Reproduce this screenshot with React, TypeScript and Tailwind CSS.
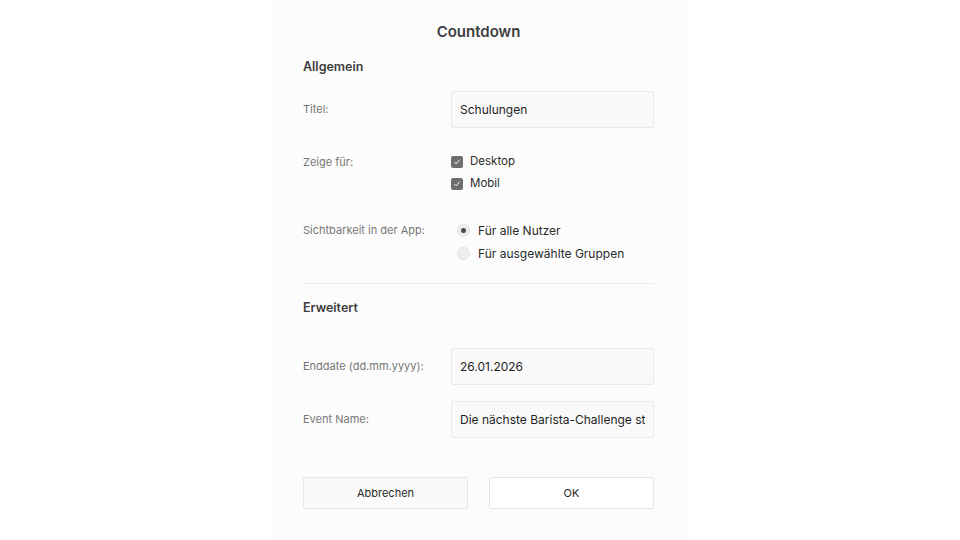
import React from "react";

const font = { fontFamily: "Inter, 'Noto Sans', sans-serif" };

const Checkbox = ({ label }: { label: string }) => (
  <label className="flex items-center h-[22px] gap-[7px]">
    <span className="w-[12px] h-[12px] rounded-[2px] bg-[#6e6e6e] flex items-center justify-center">
      <svg width="8" height="8" viewBox="0 0 8 8" fill="none">
        <path d="M1.6 4.3 L3.2 5.9 L6.4 2" stroke="#f2f2f2" strokeWidth="1" strokeLinecap="round" strokeLinejoin="round" />
      </svg>
    </span>
    <span className="text-[11.5px] text-[#2b2b2b]">{label}</span>
  </label>
);

const Radio = ({ label, checked }: { label: string; checked?: boolean }) => (
  <label className="flex items-center h-[23px] gap-[8px] pl-[6px]">
    <span className="w-[13px] h-[13px] rounded-full bg-[#eeeeee] border border-[#e2e2e2] flex items-center justify-center">
      {checked && <span className="w-[5px] h-[5px] rounded-full bg-[#4a4a4a]" />}
    </span>
    <span className="text-[12px] text-[#2b2b2b]">{label}</span>
  </label>
);

const Field = ({ value }: { value: string }) => (
  <input
    readOnly
    value={value}
    className="w-[203px] h-[37px] bg-[#f9f9f9] border border-[#e9e9e9] rounded-[2px] px-[8px] text-[12px] text-[#1f1f1f] outline-none"
    style={font}
  />
);

const Label = ({ children, className = "" }: { children: React.ReactNode; className?: string }) => (
  <div className={`w-[148px] shrink-0 text-[11px] text-[#777777] ${className}`}>{children}</div>
);

export default function App() {
  return (
    <div className="min-h-screen bg-white flex justify-center" style={font}>
      <div className="w-[414px] min-h-[540px] bg-[#fcfcfc] pl-[30px] pr-[33px]">
        <h1 className="pt-[22px] text-center text-[15px] leading-[20px] font-semibold text-[#3d3d3d]">
          Countdown
        </h1>

        <h2 className="mt-[16px] text-[12.5px] leading-[18px] font-semibold text-[#3d3d3d]">Allgemein</h2>

        <div className="mt-[15px] flex items-center">
          <Label>Titel:</Label>
          <Field value="Schulungen" />
        </div>

        <div className="mt-[23px] flex items-start">
          <Label className="leading-[22px]">Zeige für:</Label>
          <div className="flex flex-col">
            <Checkbox label="Desktop" />
            <Checkbox label="Mobil" />
          </div>
        </div>

        <div className="mt-[24px] flex items-start">
          <Label className="leading-[23px]">Sichtbarkeit in der App:</Label>
          <div className="flex flex-col">
            <Radio label="Für alle Nutzer" checked />
            <Radio label="Für ausgewählte Gruppen" />
          </div>
        </div>

        <div className="mt-[18px] border-t border-[#ececec]" />

        <h2 className="mt-[15px] text-[12.5px] leading-[18px] font-semibold text-[#3d3d3d]">Erweitert</h2>

        <div className="mt-[31px] flex items-center">
          <Label>Enddate (dd.mm.yyyy):</Label>
          <Field value="26.01.2026" />
        </div>

        <div className="mt-[16px] flex items-center">
          <Label>Event Name:</Label>
          <Field value="Die nächste Barista-Challenge startet bald" />
        </div>

        <div className="mt-[39px] flex justify-between">
          <button className="w-[165px] h-[32px] bg-[#fafafa] border border-[#e6e6e6] rounded-[2px] text-[11px] text-[#2b2b2b]">
            Abbrechen
          </button>
          <button className="w-[165px] h-[32px] bg-white border border-[#e6e6e6] rounded-[2px] text-[11px] text-[#2b2b2b]">
            OK
          </button>
        </div>
      </div>
    </div>
  );
}
